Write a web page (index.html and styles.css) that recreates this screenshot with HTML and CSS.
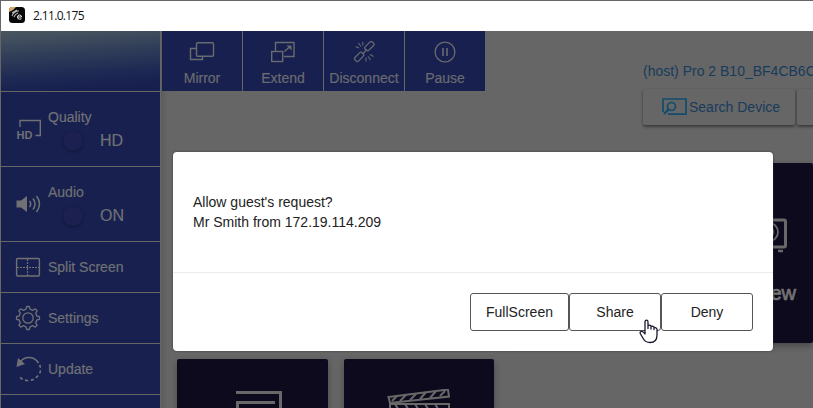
FILE: index.html
```html
<!DOCTYPE html>
<html lang="en">
<head>
<meta charset="utf-8">
<title>2.11.0.175</title>
<link rel="stylesheet" href="styles.css">
</head>
<body>
<div class="window">
  <header class="titlebar">
    <svg class="logo" width="16" height="16" viewBox="0 0 16 16"><rect width="16" height="16" rx="3.5" fill="#080808"/><path d="M0 5V3Q0 0 3 0H7Q5 3 0 5Z" fill="#d9a866"/><path d="M3 9Q5 4 10 4M5 10Q6 7 9 6M3 6L8 3" fill="none" stroke="#bbb" stroke-width="1.1"/><path d="M8.500 10H12.500Q12.500 8 10.500 8T8.500 10Q8.500 12.200 10.500 12.200L12.500 11.800" fill="none" stroke="#eee" stroke-width="1"/></svg>
    <span>2.11.0.175</span>
  </header>
  <div class="shell">
    <aside class="sidebar">
      <div class="brand"></div>
      <div class="item tall">
        <svg class="icon" width="26" height="24" viewBox="0 0 26 24"><path d="M5 10V3.500H25.300V18.500H20.500" fill="none" stroke="currentColor" stroke-width="1.4"/><text class="hd" x="1.500" y="21.500">HD</text></svg>
        <div class="setting"><span class="label">Quality</span><div class="state"><i class="knob"></i><b>HD</b></div></div>
      </div>
      <div class="item tall">
        <svg class="icon" width="26" height="24" viewBox="0 0 26 24"><path d="M1.500 8.500H6L12 4V20L6 15.500H1.500Z" fill="currentColor"/><path d="M14.500 9Q17 12 14.500 15M18 6.500Q22 12 18 17.500M21.500 4Q27.500 12 21.500 20" fill="none" stroke="currentColor" stroke-width="1.5"/></svg>
        <div class="setting audio"><span class="label">Audio</span><div class="state"><i class="knob"></i><b>ON</b></div></div>
      </div>
      <div class="item">
        <svg class="icon" width="26" height="24" viewBox="0 0 26 24"><rect x="1.600" y="3.500" width="22.800" height="17.500" rx="1" fill="none" stroke="currentColor" stroke-width="1.4"/><path d="M12.500 4V21M2 12.500H24" fill="none" stroke="currentColor" stroke-width="1.200" stroke-dasharray="2 1"/></svg>
        <span>Split Screen</span>
      </div>
      <div class="item">
        <svg class="icon" width="26" height="26" viewBox="0 0 26 26"><g fill="none" stroke="currentColor" stroke-width="1.3" stroke-linejoin="round"><path d="M11 4.200L11.700 1.500H14.300L15 4.200L17.800 5.300L20.200 3.900L22.100 5.800L20.700 8.200L21.800 11L24.500 11.700V14.300L21.800 15L20.700 17.800L22.100 20.200L20.200 22.100L17.800 20.700L15 21.800L14.300 24.500H11.700L11 21.800L8.200 20.700L5.800 22.100L3.900 20.200L5.300 17.800L4.200 15L1.500 14.300V11.700L4.200 11L5.300 8.200L3.900 5.800L5.800 3.900L8.200 5.300Z"/><circle cx="13" cy="13" r="5.200"/></g></svg>
        <span>Settings</span>
      </div>
      <div class="item">
        <svg class="icon" width="26" height="26" viewBox="0 0 26 26"><path d="M4.500 7Q8 1.500 14 1.500Q20 1.500 23.500 7" fill="none" stroke="currentColor" stroke-width="1.700"/><path d="M23.500 7Q27.500 13 24 18.500Q19 25 12 24.500Q7 24 4 20" fill="none" stroke="currentColor" stroke-width="1.700" stroke-dasharray="3.200 2.500" stroke-dashoffset="-2"/><path d="M3 2L1.500 11L10 8Z" fill="currentColor"/></svg>
        <span>Update</span>
      </div>
      <div class="item"></div>
    </aside>
    <main class="main">
      <nav class="toolbar">
        <div class="tool"><svg width="26" height="22" viewBox="0 0 26 22"><g fill="none" stroke="currentColor" stroke-width="1.400"><rect x="7.500" y="1.700" width="17" height="13.500" rx="1"/><path d="M7.500 7.500H1.500V18.500H13.500V15"/></g></svg><span>Mirror</span></div>
        <div class="tool"><svg width="26" height="22" viewBox="0 0 26 22"><g fill="none" stroke="currentColor" stroke-width="1.400"><path d="M5.500 10V1.500H24V15.500H14"/><rect x="1.700" y="10.500" width="11" height="10"/><path d="M14.500 10.500L20 5.500"/></g><path d="M16.500 4.500H21.500V9.500Z" fill="currentColor"/></svg><span>Extend</span></div>
        <div class="tool"><svg width="24" height="22" viewBox="0 0 24 22"><g fill="none" stroke="currentColor" stroke-width="1.300"><rect x="-4.500" y="-2.500" width="10" height="5" rx="1.500" transform="translate(17 5.500) rotate(-45)"/><rect x="-5.500" y="-2.500" width="10" height="5" rx="1.500" transform="translate(7.500 15.500) rotate(-45)"/><path d="M10.500 13L15 8.500M3.500 5.500L7 7M6.500 2L9 5.500M10.800 1V4.500M14 16.500V20.500M16 15.500L18.500 19M18 13.500L21.500 15.500" stroke-width="1.100"/></g></svg><span>Disconnect</span></div>
        <div class="tool"><svg width="24" height="22" viewBox="0 0 24 22"><g fill="none" stroke="currentColor" stroke-width="1.300"><circle cx="12" cy="11" r="9.900"/><path d="M10 7V15M14 7V15" stroke-width="1.600"/></g></svg><span>Pause</span></div>
      </nav>
      <section class="host">
        <div class="hostname">(host) Pro 2 B10_BF4CB6C5</div>
        <div class="actions">
          <div class="search"><svg width="25" height="18" viewBox="0 0 25 18"><g fill="none" stroke="currentColor" stroke-width="1.700"><path d="M1 14V1H24V16.200H6"/><circle cx="9.500" cy="8.500" r="4"/><path d="M6.500 11.500L2 16" stroke-width="2.400"/></g></svg><span>Search Device</span></div>
          <div class="search next"></div>
        </div>
      </section>
      <section class="cards">
        <div class="card view">
          <svg width="66" height="36" viewBox="0 0 66 36"><g fill="none" stroke="currentColor"><rect x="25" y="2" width="39.500" height="27" rx="1.500" stroke-width="3"/><circle cx="47.500" cy="14" r="9.500" stroke-width="1.800"/><circle cx="47.500" cy="14" r="5" stroke-width="1.500"/><path d="M30 33H36M57 33H62" stroke-width="2.500"/></g></svg>
          <span>View</span>
        </div>
        <div class="card doc"><svg width="48" height="60" viewBox="0 0 48 60"><g fill="none" stroke="currentColor" stroke-width="3"><path d="M0 1.500H44.500V50"/><path d="M39 11.500H1.500V60"/></g></svg></div>
        <div class="card film"><svg width="64" height="64" viewBox="0 0 64 64"><g fill="none" stroke="currentColor" stroke-width="2"><path d="M1.500 8L61 0.500L62 7.500L3 14Z"/><path d="M5 12L10 7M13 12L19 6M23 11L29 5M33 10L39 3M43 9L49 2M53 7L58 2"/><path d="M3 15H62V60H3ZM3 23H62M8 15L13 23M18 15L23 23M28 15L33 23M38 15L43 23M48 15L53 23"/></g></svg></div>
      </section>
    </main>
  </div>
</div>
<div class="dialog">
  <div class="message">Allow guest's request?<br>Mr Smith from 172.19.114.209</div>
  <div class="buttons"><button class="wide">FullScreen</button><button>Share</button><button>Deny</button></div>
</div>
<svg class="cursor" width="20" height="25" viewBox="0 0 20 25"><path d="M6 14V3Q6 1.200 7.500 1.200T9 3V9.500V6.500Q10.500 5.500 12 7V10V7.500Q13.500 6.500 15 8V10.500V9Q17 8 18 10V16Q18 23.500 11 23.500Q6.500 23.500 4.500 20L1.500 15Q0.500 13 2 12.500Q4 12 6 15Z" fill="#fff" stroke="#15152c" stroke-width="1.300" stroke-linejoin="round"/></svg>
</body>
</html>
```
FILE: styles.css
```css
* { box-sizing: border-box; }
body { margin: 0; width: 813px; height: 408px; overflow: hidden; background: #666; font-family: "Liberation Sans", Arial, sans-serif; font-size: 14px; }
svg { display: block; flex: none; }
.window { height: 408px; overflow: hidden; border-top: 1px solid #666; border-left: 1px solid #666; }
.titlebar { height: 30px; background: #fff; display: flex; align-items: center; padding: 0 0 2px 8px; gap: 8px; font: 12px "Open Sans", sans-serif; color: #111; letter-spacing: -0.65px; }
.shell { display: flex; }
.sidebar { width: 159px; flex: none; color: #707174; }
.brand { height: 61px; border-bottom: 1px solid #666; background: linear-gradient(176deg, #46545f 5%, #323f59 35%, #1d2853 70%, #17204f 88%); }
.item { height: 51px; background: #17204f; border-bottom: 1px solid #666; display: flex; align-items: center; padding-left: 14px; gap: 7px; -webkit-text-stroke: 0.2px currentColor; }
.item.tall { height: 75px; }
.hd { font: bold 11px "Liberation Sans", sans-serif; fill: currentColor; stroke: none; }
.setting { height: 74px; padding-top: 17px; }
.label { display: block; line-height: 16px; }
.state { display: flex; align-items: center; padding-left: 15px; gap: 17px; height: 32px; }
.state b { font-size: 16px; font-weight: normal; }
.knob { width: 20px; height: 20px; border-radius: 50%; background: #1b2050; box-shadow: 0 1px 3px rgba(8,13,38,.5); }
.main { flex: none; width: 652px; margin-left: 1px; height: 377px; overflow: hidden; background: #666; box-shadow: inset 7px 0 5px -4px #5d5d5d; }
.toolbar { display: flex; width: 324px; padding-left: 1px; }
.tool { width: 81px; flex: none; height: 60px; background: #17204f; color: #696b70; border-right: 1px solid #666; display: flex; flex-direction: column; align-items: center; padding-top: 10px; gap: 7px; -webkit-text-stroke: 0.2px currentColor; }
.tool:last-child { border: 0; width: 80px; }
.tool span { line-height: 16px; }
.host { height: 72px; margin: -29px 0 0 482px; color: #183b5c; }
.hostname { line-height: 18px; white-space: nowrap; }
.actions { display: flex; gap: 2px; margin-top: 9px; }
.search { width: 152px; height: 36px; flex: none; border-radius: 2px; background: #666; box-shadow: 0 2px 3px rgba(0,0,0,.4), 0 0 2px rgba(0,0,0,.15); display: flex; align-items: center; padding-left: 19px; gap: 2px; }
.search svg { color: #124d6e; }
.cards { display: grid; grid-template-columns: 151px 150px 1fr; grid-template-rows: 180px 180px; gap: 16px; margin-top: 29px; padding-left: 16px; }
.card { background: #0d0a1e; color: #686868; border-radius: 2px; box-shadow: 0 3px 7px rgba(0,0,0,.3); display: flex; justify-content: center; }
.view { grid-column: 3; display: flex; flex-direction: column; align-items: flex-end; justify-content: flex-start; padding: 55px 26px 0 0; }
.view span { font-size: 20px; line-height: 24px; margin: 27px -9px 0 0; color: #747474; -webkit-text-stroke: 0.7px currentColor; }
.doc { padding-top: 32px; padding-left: 14px; }
.film { padding-top: 30px; }
.dialog { position: absolute; left: 173px; top: 152px; width: 600px; height: 199px; background: #fff; border-radius: 4px; box-shadow: 0 0 2px #333; color: #222; }
.message { height: 121px; padding: 40px 20px 0; line-height: 20px; border-bottom: 1px solid #e9ecef; }
.buttons { display: flex; justify-content: flex-end; padding: 20px 20px 0; }
button { width: 92px; height: 38px; padding: 0; border: 1px solid #555; border-radius: 3px; background: #fff; color: #222; font: 14px "Liberation Sans", Arial, sans-serif; }
button.wide { width: 99px; }
.cursor { position: absolute; left: 639px; top: 319px; }
```
